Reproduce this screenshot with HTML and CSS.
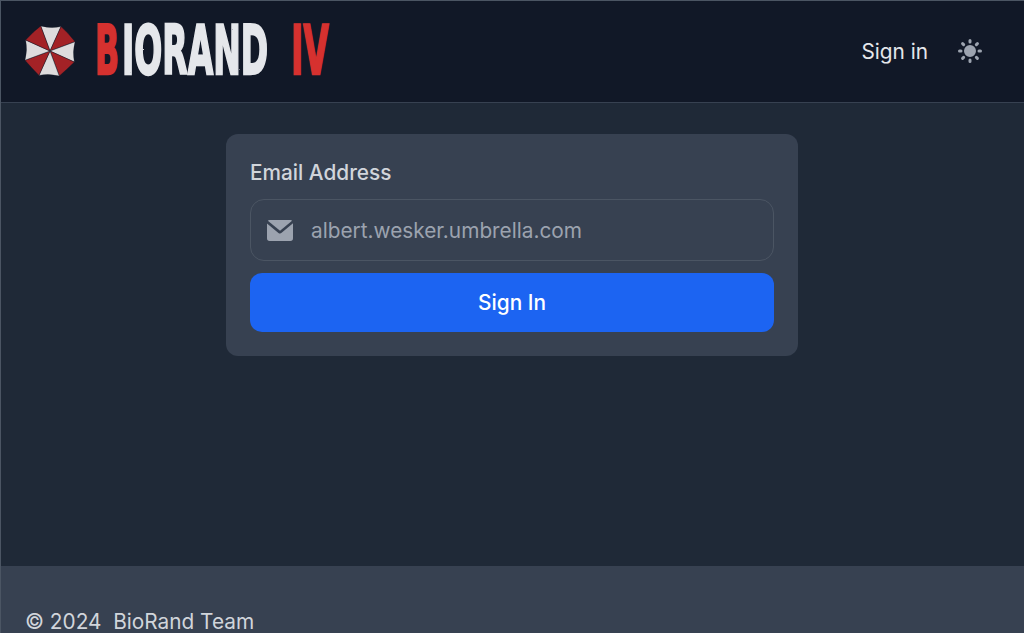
FILE: index.html
```html
<!DOCTYPE html>
<html lang="en">
<head>
    <meta charset="UTF-8">
    <meta name="viewport" content="width=device-width, initial-scale=1.0">
    <title>BioRand IV</title>
    <link rel="stylesheet" href="styles.css">
</head>
<body>
    <header class="navbar">
        <a class="brand" href="#">
            <svg class="umbrella" viewBox="-25 -25 50 50" aria-hidden="true">
                <g transform="rotate(2)">
                    <path class="seg-white" d="M0 0L-9.800 -23.800Q0 -21.500 9.800 -23.800Z"/>
                    <path class="seg-red" d="M0 0L9.800 -23.800Q17 -18 23.800 -9.800Z"/>
                    <path class="seg-white" d="M0 0L23.800 -9.800Q21.500 0 23.800 9.800Z"/>
                    <path class="seg-red" d="M0 0L23.800 9.800Q17 17 9.800 23.800Z"/>
                    <path class="seg-white" d="M0 0L9.800 23.800Q0 21.500 -9.800 23.800Z"/>
                    <path class="seg-red" d="M0 0L-9.800 23.800Q-17 17 -23.800 9.800Z"/>
                    <path class="seg-white" d="M0 0L-23.800 9.800Q-21.500 0 -23.800 -9.800Z"/>
                    <path class="seg-red" d="M0 0L-23.800 -9.800Q-17 -18 -9.800 -23.800Z"/>
                </g>
            </svg>
            <svg class="wordmark" viewBox="0 0 240 60" role="img" aria-label="BioRand IV">
                <defs>
                    <filter id="rough" x="-5%" y="-5%" width="110%" height="110%">
                        <feTurbulence type="fractalNoise" baseFrequency="0.3" numOctaves="2" seed="4"/>
                        <feDisplacementMap in="SourceGraphic" scale="1.500"/>
                    </filter>
                </defs>
                <text class="mark-red" transform="translate(0 53) scale(.47 1)">B</text>
                <g filter="url(#rough)">
                    <text class="mark-white" transform="translate(27 53) scale(.492 1)">IORAND</text>
                </g>
                <text class="mark-red" transform="translate(196 53) scale(.49 1)">IV</text>
            </svg>
        </a>
        <div class="nav-actions">
            <a class="nav-link" href="#">Sign in</a>
            <button class="theme-toggle" type="button" aria-label="Toggle theme">
                <svg viewBox="0 0 20 20" fill="currentColor"><path d="M10 2a1 1 0 011 1v1a1 1 0 11-2 0V3a1 1 0 011-1zm4 8a4 4 0 11-8 0 4 4 0 018 0zm-.464 4.95l.707.707a1 1 0 001.414-1.414l-.707-.707a1 1 0 00-1.414 1.414zm2.12-10.607a1 1 0 010 1.414l-.706.707a1 1 0 11-1.414-1.414l.707-.707a1 1 0 011.414 0zM17 11a1 1 0 100-2h-1a1 1 0 100 2h1zm-7 4a1 1 0 011 1v1a1 1 0 11-2 0v-1a1 1 0 011-1zM5.050 6.464A1 1 0 106.465 5.050l-.708-.707a1 1 0 00-1.414 1.414l.707.707zm1.414 8.486l-.707.707a1 1 0 01-1.414-1.414l.707-.707a1 1 0 011.414 1.414zM4 11a1 1 0 100-2H3a1 1 0 000 2h1z"/></svg>
            </button>
        </div>
    </header>
    <main class="content">
        <form class="card">
            <label class="field-label" for="email">Email Address</label>
            <div class="input-wrap">
                <svg class="input-icon" viewBox="0 0 20 16" fill="currentColor" aria-hidden="true">
                    <path d="m10.036 8.278 9.258-7.79A1.979 1.979 0 0 0 18 0H2A1.987 1.987 0 0 0 .641.541l9.395 7.737Z"/>
                    <path d="M11.241 9.817c-.36.275-.801.425-1.255.427-.428 0-.845-.138-1.187-.395L0 2.6V14a2 2 0 0 0 2 2h16a2 2 0 0 0 2-2V2.500l-8.759 7.317Z"/>
                </svg>
                <input class="text-input" type="text" id="email" placeholder="albert.wesker.umbrella.com">
            </div>
            <button class="submit" type="button">Sign In</button>
        </form>
    </main>
    <footer class="footer">
        <span>© 2024&nbsp; BioRand Team</span>
    </footer>
</body>
</html>
```

FILE: styles.css
```css
* {
    box-sizing: border-box;
}
html {
    overflow: hidden;
}
body {
    display: flex;
    flex-direction: column;
    height: 100vh;
    margin: 0;
    overflow: hidden;
    font-family: Inter, "Noto Sans", sans-serif;
    font-size: 20.8px;
    background-color: #1f2937;
}
/* thin window edge that sits over the page */
body::after {
    content: "";
    position: fixed;
    inset: 0;
    border-top: 1px solid #4b5563;
    border-left: 1px solid #4b5563;
    pointer-events: none;
}
.navbar {
    display: flex;
    justify-content: space-between;
    align-items: center;
    height: 103px;
    flex-shrink: 0;
    padding: 0 39px 0 24px;
    background: #111827;
    border-bottom: 1px solid #374151;
}
.brand {
    display: flex;
    align-items: center;
    gap: 19px;
    text-decoration: none;
}
.umbrella {
    width: 52px;
    height: 52px;
}
.seg-white {
    fill: #dedcdd;
    stroke: #111827;
    stroke-width: 0.4px;
}
.seg-red {
    fill: #a32226;
    stroke: #111827;
    stroke-width: 0.4px;
}
.wordmark {
    width: 240px;
    height: 60px;
    overflow: visible;
}
.wordmark text {
    font-family: "DejaVu Sans", sans-serif;
    font-size: 67px;
    font-weight: 700;
    stroke-width: 2.5px;
}
.mark-red {
    fill: #d6312f;
    stroke: #d6312f;
}
.mark-white {
    fill: #e5e7eb;
    stroke: #e5e7eb;
}
.nav-actions {
    display: flex;
    align-items: center;
    gap: 27px;
}
.nav-link {
    color: #e5e7eb;
    text-decoration: none;
}
.theme-toggle {
    display: flex;
    padding: 0;
    width: 30px;
    height: 30px;
    border: none;
    background: none;
    color: #9ca3af;
}
.content {
    flex: 1;
    padding-top: 31px;
}
.card {
    display: flex;
    flex-direction: column;
    width: 572px;
    margin: 0 auto;
    padding: 24px;
    background: #374151;
    border-radius: 12px;
}
.field-label {
    margin-bottom: 12px;
    color: #d1d5db;
    font-weight: 500;
    line-height: 29px;
}
.input-wrap {
    display: flex;
    align-items: center;
    gap: 18px;
    height: 62px;
    padding: 0 16px;
    border: 1px solid #4b5563;
    border-radius: 14px;
}
.input-icon {
    width: 26px;
    height: 21px;
    flex-shrink: 0;
    color: #9ca3af;
}
.text-input {
    flex: 1;
    padding: 0;
    border: none;
    outline: none;
    background: none;
    color: #fff;
    font-family: inherit;
    font-size: inherit;
}
.text-input::placeholder {
    color: #9ca3af;
    opacity: 1;
}
.submit {
    height: 59px;
    margin-top: 12px;
    border: none;
    border-radius: 12px;
    background: #1c64f2;
    color: #fff;
    font-family: inherit;
    font-size: inherit;
    font-weight: 500;
}
.footer {
    height: 67px;
    flex-shrink: 0;
    padding: 41px 25px 0;
    background: #374151;
    color: #d1d5db;
    line-height: 29px;
}
```
